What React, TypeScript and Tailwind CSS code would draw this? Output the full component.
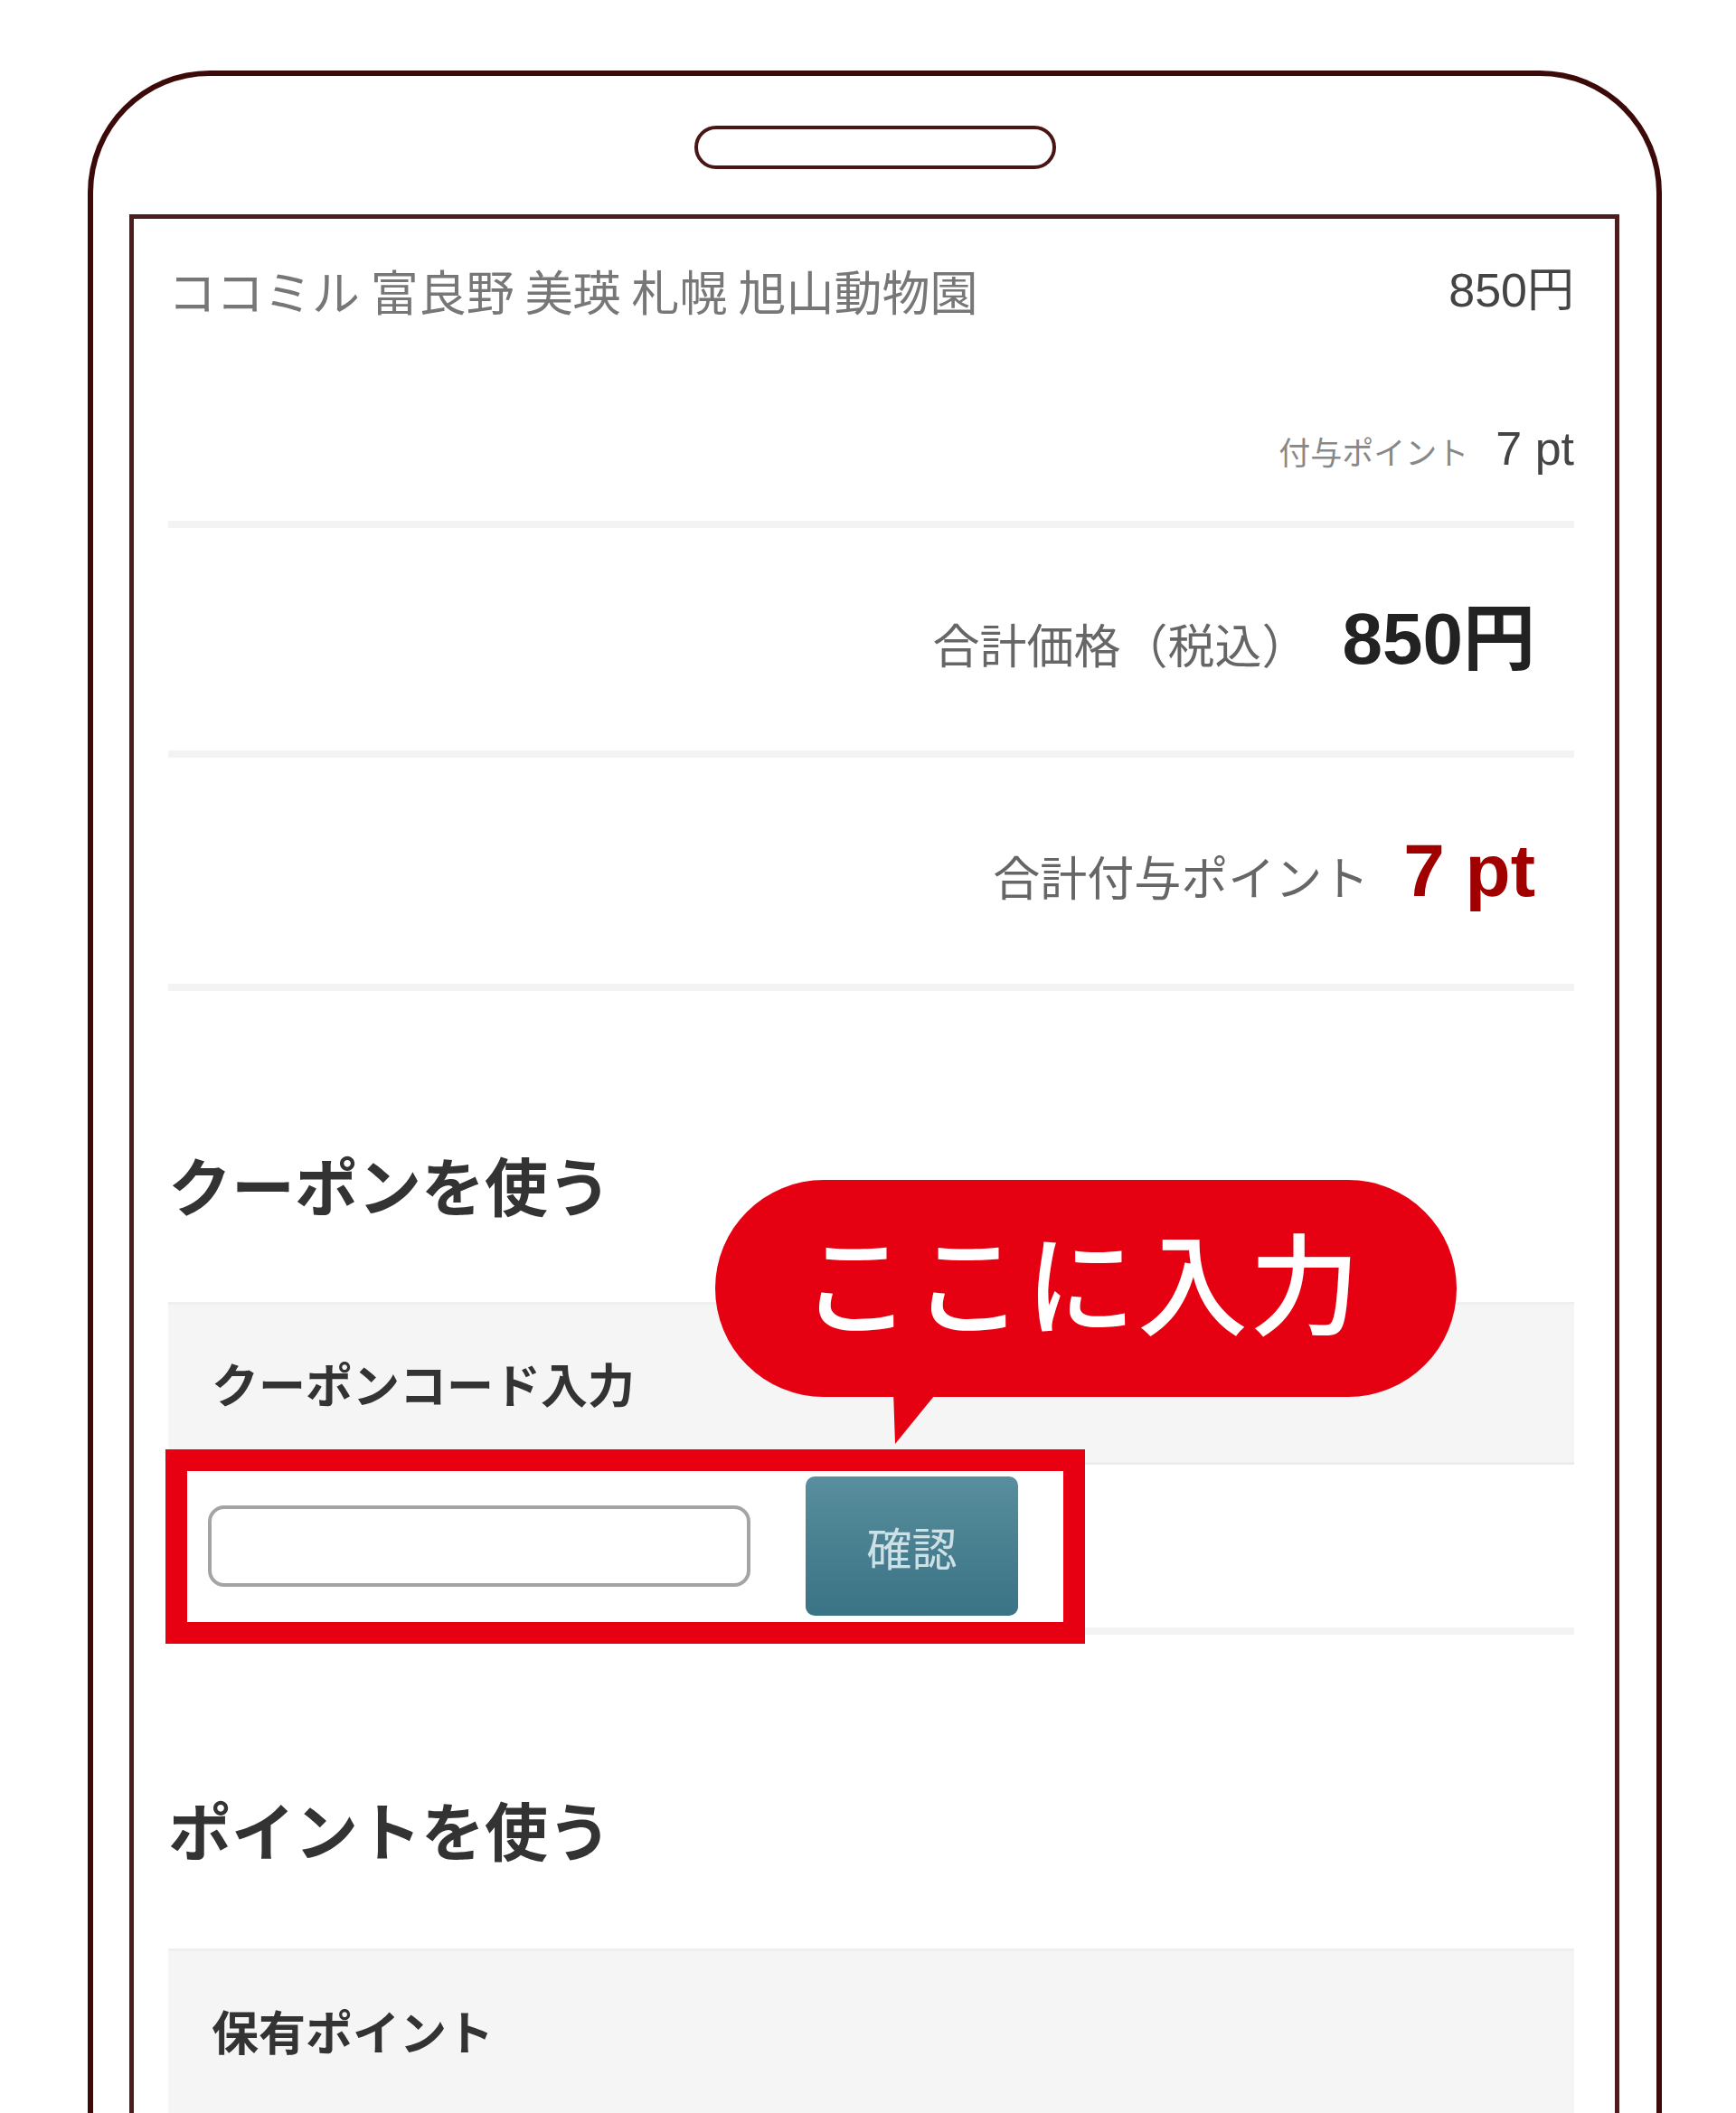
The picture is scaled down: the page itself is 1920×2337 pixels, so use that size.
const jp = "font-['Noto_Sans_CJK_JP',sans-serif]";
const num = "font-['Liberation_Sans','Noto_Sans_CJK_JP',sans-serif]";

function Divider() {
  return <div className="h-[8px] bg-[#f3f3f3]" />;
}

function SpeechBubble() {
  return (
    <>
      <div className="absolute left-[643px] top-[1063px] flex h-[240px] w-[820px] items-center justify-center rounded-[120px] bg-[#e50012] pb-[22px] pr-[10px]">
        <span className={`${jp} text-[122px] leading-none font-medium tracking-[2px] text-white`}>
          ここに入力
        </span>
      </div>
      <svg
        className="absolute left-[840px] top-[1296px]"
        width="52"
        height="60"
        viewBox="0 0 52 60"
      >
        <polygon points="0,0 50,0 2,59" fill="#e50012" />
      </svg>
    </>
  );
}

export default function App() {
  return (
    <div className="h-[2337px] w-[1920px] overflow-hidden bg-white">
      <div className="ml-[97px] mt-[78px] h-[2300px] w-[1741px] rounded-t-[135px] border-[6px] border-b-0 border-[#3d0a0a]">
        <div className="mt-[55px] flex justify-center">
          <div className="h-[48px] w-[400px] rounded-full border-[4px] border-[#4a1515]" />
        </div>

        <div className="ml-[40px] mr-[41px] mt-[50px] h-[2200px] border-[5px] border-b-0 border-[#4d1c1c]">
          <div className="relative pl-[38px] pr-[45px]">
            {/* product */}
            <div className="pt-[51px]">
              <div className="flex h-[56px] items-center justify-between">
                <span className={`${jp} text-[53px] leading-none text-[#777]`}>
                  ココミル 富良野 美瑛 札幌 旭山動物園
                </span>
                <span className={`${num} text-[52px] leading-none text-[#444]`}>
                  850円
                </span>
              </div>
              <div className="mt-[119px] flex h-[56px] items-center justify-end">
                <div className="flex items-baseline gap-[30px]">
                  <span className={`${jp} text-[35px] leading-none text-[#888]`}>
                    付与ポイント
                  </span>
                  <span className={`${num} text-[52px] leading-none text-[#444]`}>
                    7 pt
                  </span>
                </div>
              </div>
              <div className="mt-[52px]">
                <Divider />
              </div>
            </div>

            {/* total price */}
            <div className="flex h-[246px] items-center justify-end pr-[43px]">
              <div className="flex items-baseline gap-[37px]">
                <span className={`${jp} text-[52px] leading-none text-[#666]`}>
                  合計価格（税込）
                </span>
                <span className={`${num} text-[80px] leading-none font-bold text-[#222]`}>
                  850円
                </span>
              </div>
            </div>
            <Divider />

            {/* total points */}
            <div className="flex h-[250px] items-center justify-end pr-[43px]">
              <div className="flex items-baseline gap-[38px]">
                <span className={`${jp} text-[52px] leading-none text-[#666]`}>
                  合計付与ポイント
                </span>
                <span className={`${num} text-[82px] leading-none font-bold text-[#a00000]`}>
                  7 pt
                </span>
              </div>
            </div>
            <Divider />

            {/* coupon */}
            <h2 className={`${jp} mt-[179px] text-[70px] leading-none font-bold text-[#333]`}>
              クーポンを使う
            </h2>
            <div className="mt-[95px] flex h-[180px] items-center border-y-[3px] border-t-[#efefef] border-b-[#ececec] bg-[#f5f5f5] pl-[48px]">
              <span className={`${jp} text-[52px] leading-none font-bold text-[#333]`}>
                クーポンコード入力
              </span>
            </div>
            <div className="flex h-[188px] items-center border-b-[8px] border-[#f3f3f3] pl-[44px]">
              <div className="h-[90px] w-[600px] rounded-[18px] border-[4px] border-[#a4a4a4] bg-white" />
              <button className="ml-[61px] flex h-[154px] w-[235px] items-center justify-center rounded-[10px] bg-gradient-to-b from-[#588e9d] to-[#3a7385]">
                <span className={`${jp} text-[50px] leading-none text-[#cde0e6]`}>
                  確認
                </span>
              </button>
            </div>

            {/* points */}
            <h2 className={`${jp} mt-[180px] text-[70px] leading-none font-bold text-[#333]`}>
              ポイントを使う
            </h2>
            <div className="mt-[97px] h-[400px] border-t-[3px] border-[#efefef] bg-[#f5f5f5] pl-[48px] pt-[62px]">
              <span className={`${jp} text-[52px] leading-none font-bold text-[#333]`}>
                保有ポイント
              </span>
            </div>

            {/* annotation */}
            <div className="absolute left-[35px] top-[1361px] h-[215px] w-[1017px] border-[24px] border-[#e60012]" />
            <SpeechBubble />
          </div>
        </div>
      </div>
    </div>
  );
}
